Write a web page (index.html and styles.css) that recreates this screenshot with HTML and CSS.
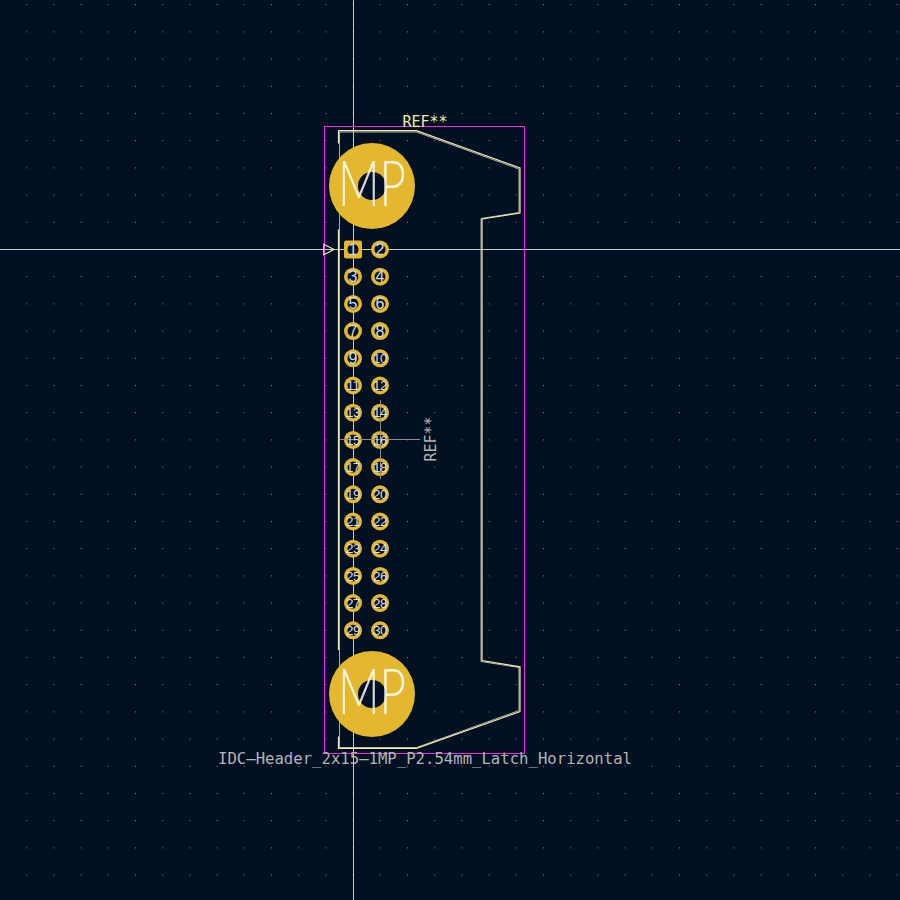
FILE: index.html
```html
<!DOCTYPE html>
<html lang="en">
<head>
<meta charset="utf-8">
<title>Footprint viewer</title>
<link rel="stylesheet" href="styles.css">
</head>
<body>
<svg class="canvas" width="900" height="900" viewBox="0 0 900 900" xmlns="http://www.w3.org/2000/svg">
  <defs>
    <pattern id="grid" patternUnits="userSpaceOnUse" x="26.2" y="4.2" width="27.2" height="27.2">
      <rect class="grid-dot" width="1" height="1"/>
    </pattern>
  </defs>
  <rect width="900" height="900" fill="url(#grid)"/>

  <path class="cross" d="M353.5 0V900M0 249.5H900"/>

  <rect class="courtyard" x="324.5" y="126.5" width="200" height="627"/>

  <path class="fab" d="M339.5 132H416.5L519 169V212.5L481 218.5V661.5L519 667.5V710.5L416.5 747.5H339.5Z"/>
  <path class="silk" d="M338.5 143.5V130.7H416.5L520 168V213L482 219V660.6L520 666.8V711.5L416.5 748.3H338.5V736.5M338.5 229.5V650"/>
  <path class="silk" d="M323.8 244.3L334 249.5L323.8 254.7Z"/>

  <circle class="pad" cx="372" cy="186" r="43"/>
  <circle class="hole" cx="372" cy="186" r="14"/>
  <circle class="pad" cx="372" cy="694" r="43"/>
  <circle class="hole" cx="372" cy="694" r="14"/>

  <rect class="pad" x="344" y="240.5" width="18" height="18" rx="2"/>
  <circle class="pad" cx="380" cy="249.5" r="9"/>
  <circle class="pad" cx="353" cy="276.7" r="9"/><circle class="pad" cx="380" cy="276.7" r="9"/>
  <circle class="pad" cx="353" cy="303.9" r="9"/><circle class="pad" cx="380" cy="303.9" r="9"/>
  <circle class="pad" cx="353" cy="331.1" r="9"/><circle class="pad" cx="380" cy="331.1" r="9"/>
  <circle class="pad" cx="353" cy="358.3" r="9"/><circle class="pad" cx="380" cy="358.3" r="9"/>
  <circle class="pad" cx="353" cy="385.5" r="9"/><circle class="pad" cx="380" cy="385.5" r="9"/>
  <circle class="pad" cx="353" cy="412.7" r="9"/><circle class="pad" cx="380" cy="412.7" r="9"/>
  <circle class="pad" cx="353" cy="439.9" r="9"/><circle class="pad" cx="380" cy="439.9" r="9"/>
  <circle class="pad" cx="353" cy="467.1" r="9"/><circle class="pad" cx="380" cy="467.1" r="9"/>
  <circle class="pad" cx="353" cy="494.3" r="9"/><circle class="pad" cx="380" cy="494.3" r="9"/>
  <circle class="pad" cx="353" cy="521.5" r="9"/><circle class="pad" cx="380" cy="521.5" r="9"/>
  <circle class="pad" cx="353" cy="548.7" r="9"/><circle class="pad" cx="380" cy="548.7" r="9"/>
  <circle class="pad" cx="353" cy="575.9" r="9"/><circle class="pad" cx="380" cy="575.9" r="9"/>
  <circle class="pad" cx="353" cy="603.1" r="9"/><circle class="pad" cx="380" cy="603.1" r="9"/>
  <circle class="pad" cx="353" cy="630.3" r="9"/><circle class="pad" cx="380" cy="630.3" r="9"/>

  <circle class="hole" cx="353" cy="249.5" r="5.5"/><circle class="hole" cx="380" cy="249.5" r="5.5"/>
  <circle class="hole" cx="353" cy="276.7" r="5.5"/><circle class="hole" cx="380" cy="276.7" r="5.5"/>
  <circle class="hole" cx="353" cy="303.9" r="5.5"/><circle class="hole" cx="380" cy="303.9" r="5.5"/>
  <circle class="hole" cx="353" cy="331.1" r="5.5"/><circle class="hole" cx="380" cy="331.1" r="5.5"/>
  <circle class="hole" cx="353" cy="358.3" r="5.5"/><circle class="hole" cx="380" cy="358.3" r="5.5"/>
  <circle class="hole" cx="353" cy="385.5" r="5.5"/><circle class="hole" cx="380" cy="385.5" r="5.5"/>
  <circle class="hole" cx="353" cy="412.7" r="5.5"/><circle class="hole" cx="380" cy="412.7" r="5.5"/>
  <circle class="hole" cx="353" cy="439.9" r="5.5"/><circle class="hole" cx="380" cy="439.9" r="5.5"/>
  <circle class="hole" cx="353" cy="467.1" r="5.5"/><circle class="hole" cx="380" cy="467.1" r="5.5"/>
  <circle class="hole" cx="353" cy="494.3" r="5.5"/><circle class="hole" cx="380" cy="494.3" r="5.5"/>
  <circle class="hole" cx="353" cy="521.5" r="5.5"/><circle class="hole" cx="380" cy="521.5" r="5.5"/>
  <circle class="hole" cx="353" cy="548.7" r="5.5"/><circle class="hole" cx="380" cy="548.7" r="5.5"/>
  <circle class="hole" cx="353" cy="575.9" r="5.5"/><circle class="hole" cx="380" cy="575.9" r="5.5"/>
  <circle class="hole" cx="353" cy="603.1" r="5.5"/><circle class="hole" cx="380" cy="603.1" r="5.5"/>
  <circle class="hole" cx="353" cy="630.3" r="5.5"/><circle class="hole" cx="380" cy="630.3" r="5.5"/>

  <path class="anchor" d="M339 439.5H420M380.5 400V479"/>

  <g class="num one">
    <text x="353" y="255">1</text><text x="380" y="255">2</text>
    <text x="353" y="282.2">3</text><text x="380" y="282.2">4</text>
    <text x="353" y="309.4">5</text><text x="380" y="309.4">6</text>
    <text x="353" y="336.6">7</text><text x="380" y="336.6">8</text>
    <text x="353" y="363.8">9</text>
  </g>
  <g class="num two">
    <text x="380" y="363">10</text>
    <text x="353" y="390.2">11</text><text x="380" y="390.2">12</text>
    <text x="353" y="417.4">13</text><text x="380" y="417.4">14</text>
    <text x="353" y="444.6">15</text><text x="380" y="444.6">16</text>
    <text x="353" y="471.8">17</text><text x="380" y="471.8">18</text>
    <text x="353" y="499">19</text><text x="380" y="499">20</text>
    <text x="353" y="526.2">21</text><text x="380" y="526.2">22</text>
    <text x="353" y="553.4">23</text><text x="380" y="553.4">24</text>
    <text x="353" y="580.6">25</text><text x="380" y="580.6">26</text>
    <text x="353" y="607.8">27</text><text x="380" y="607.8">28</text>
    <text x="353" y="635">29</text><text x="380" y="635">30</text>
  </g>

  <text class="mp" x="372" y="205.5" textLength="68" lengthAdjust="spacingAndGlyphs">MP</text>
  <text class="mp" x="372" y="713.5" textLength="68" lengthAdjust="spacingAndGlyphs">MP</text>

  <text class="ref-top" x="425" y="127" textLength="45" lengthAdjust="spacingAndGlyphs">REF**</text>
  <text class="ref-side" transform="translate(435.5 439) rotate(-90)" textLength="45" lengthAdjust="spacingAndGlyphs">REF**</text>
  <text class="value" x="425" y="764" textLength="414" lengthAdjust="spacingAndGlyphs">IDC—Header_2x15—1MP_P2.54mm_Latch_Horizontal</text>
</svg>
</body>
</html>
```

FILE: styles.css
```css
html, body {
  margin: 0;
  padding: 0;
  background: #001023;
}

.canvas {
  display: block;
  background: #001023;
}

.grid-dot {
  fill: #8c8c8c;
  shape-rendering: crispEdges;
}

.cross {
  fill: none;
  stroke: #c8ccd0;
  stroke-width: 1;
  shape-rendering: crispEdges;
}

.courtyard {
  fill: none;
  stroke: #ff26e2;
  stroke-width: 1;
  shape-rendering: crispEdges;
}

.fab {
  fill: none;
  stroke: #afafaf;
  stroke-width: 1;
}

.silk {
  fill: none;
  stroke: #f2eda1;
  stroke-width: 1.2;
}

.pad {
  fill: #e3b72e;
}

.hole {
  fill: #001023;
}

.anchor {
  fill: none;
  stroke: #8f8f8f;
  stroke-width: 1;
  shape-rendering: crispEdges;
}

.num text {
  fill: #d8dce2;
  text-anchor: middle;
  font-family: "Liberation Sans", sans-serif;
}

.one text {
  font-size: 16px;
}

.two text {
  font-size: 13.5px;
  letter-spacing: -0.5px;
}

.mp {
  fill: rgba(255, 255, 255, 0.85);
  text-anchor: middle;
  font-family: "Lato", sans-serif;
  font-weight: 300;
  font-size: 63px;
}

.ref-top,
.ref-side,
.value {
  text-anchor: middle;
  font-family: "DejaVu Sans Mono", monospace;
}

.ref-top {
  fill: #f2eda1;
  font-size: 16px;
}

.ref-side {
  fill: #b4b4b4;
  font-size: 16px;
}

.value {
  fill: #b4b4b4;
  font-size: 15.6px;
}
```
